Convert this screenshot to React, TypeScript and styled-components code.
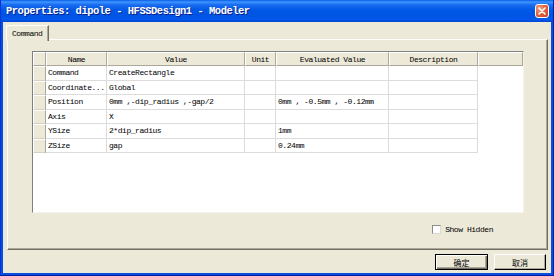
import { Fragment } from "react";
import styled, { createGlobalStyle } from "styled-components";

const GlobalStyle = createGlobalStyle`
  html, body {
    margin: 0;
    padding: 0;
    background: #ffffff;
  }
  #root {
    width: 554px;
    height: 276px;
  }
`

const mono = `"Liberation Mono", "DejaVu Sans Mono", monospace`
const beige = '#ECE9D8'

const Window = styled.div`
  width: 554px;
  height: 276px;
  box-sizing: border-box;
  display: flex;
  flex-direction: column;
  background: #0a4ee0;
  border-left: 1px solid #0831d9;
  border-right: 1px solid #001ea0;
  border-bottom: 1px solid #001ea0;
`
const TitleBar = styled.div`
  height: 22px;
  flex: none;
  display: flex;
  align-items: center;
  justify-content: space-between;
  padding: 0 4px 0 5px;
  background: linear-gradient(to bottom, #0a5ee8 0%, #3d95ff 9%, #1a6cf0 22%, #0058e6 45%, #0054e3 70%, #0058ea 88%, #0046d4 100%);
`
const Title = styled.div`
  font-family: ${mono};
  font-weight: bold;
  font-size: 10.5px;
  letter-spacing: -0.5px;
  color: #ffffff;
  text-shadow: 1px 1px 0 #0a1e8c;
  white-space: nowrap;
`
const CloseButton = styled.div`
  width: 14px;
  height: 14px;
  box-sizing: border-box;
  border: 1px solid #ffffff;
  border-radius: 3px;
  background: radial-gradient(circle at 30% 30%, #f2a080 0%, #e2613c 50%, #c8411d 100%);
  display: flex;
  align-items: center;
  justify-content: center;
`
const Body = styled.div`
  flex: 1;
  margin: 0 2px 2px 2px;
  background: ${beige};
  display: flex;
  flex-direction: column;
  padding: 3px 3px 2px 4px;
`
const TabStrip = styled.div`
  display: flex;
  height: 15px;
  margin-left: -1px;
  position: relative;
  z-index: 1;
  margin-bottom: -1px;
`
const Tab = styled.div`
  box-sizing: border-box;
  height: 16px;
  padding: 2px 6px 0 5px;
  background: ${beige};
  border-top: 1px solid #ffffff;
  border-left: 1px solid #ffffff;
  border-right: 1px solid #716f64;
  border-top-left-radius: 2px;
  box-shadow: inset -1px 0 0 #aca899;
  font-family: ${mono};
  font-size: 8px;
  letter-spacing: -0.45px;
  color: #000;
  line-height: 12px;
`
const Panel = styled.div`
  height: 211px;
  box-sizing: border-box;
  border-top: 1px solid #ffffff;
  border-left: 1px solid #ffffff;
  border-right: 1px solid #716f64;
  border-bottom: 1px solid #716f64;
  box-shadow: inset -1px -1px 0 #aca899;
  padding: 11px 0 0 24px;
  display: flex;
  flex-direction: column;
`
const Well = styled.div`
  width: 492px;
  height: 162px;
  box-sizing: border-box;
  background: #ffffff;
  border-top: 1px solid #808080;
  border-left: 1px solid #808080;
  border-right: 1px solid #f4f3ee;
  border-bottom: 1px solid #f4f3ee;
`
const Table = styled.div`
  display: grid;
  grid-template-columns: 13px 61px 138px 31px 113px 89px 45px;
  grid-template-rows: 14px repeat(6, 14.5px);
`
const cellText = `
  box-sizing: border-box;
  font-family: ${mono};
  font-size: 8px;
  letter-spacing: -0.45px;
  color: #000;
  white-space: nowrap;
  overflow: hidden;
  display: flex;
  align-items: center;
`
const HeadCell = styled.div`
  ${cellText}
  justify-content: center;
  background: ${beige};
  border-top: 1px solid #ffffff;
  border-left: 1px solid #ffffff;
  border-right: 1px solid #aca899;
  border-bottom: 1px solid #aca899;
`
const RowHead = styled.div`
  box-sizing: border-box;
  background: ${beige};
  border-top: 1px solid #ffffff;
  border-left: 1px solid #ffffff;
  border-right: 1px solid #aca899;
  border-bottom: 1px solid #d4d0c8;
`
const Cell = styled.div`
  ${cellText}
  padding-left: 2px;
  background: #ffffff;
  border-right: 1px solid #dcdcdc;
  border-bottom: 1px solid #dcdcdc;
`
const Filler = styled.div`
  background: #ffffff;
`
const CheckRow = styled.div`
  display: flex;
  align-items: center;
  justify-content: flex-end;
  gap: 4px;
  margin-top: 11px;
  padding-right: 54px;
  height: 10px;
`
const CheckBox = styled.div`
  width: 9px;
  height: 9px;
  box-sizing: border-box;
  background: #ffffff;
  border-top: 1px solid #8c8c8c;
  border-left: 1px solid #8c8c8c;
  border-right: 1px solid #d8d8d8;
  border-bottom: 1px solid #d8d8d8;
`
const CheckLabel = styled.span`
  font-family: ${mono};
  font-size: 8px;
  letter-spacing: -0.45px;
  color: #000;
`
const ButtonRow = styled.div`
  display: flex;
  justify-content: flex-end;
  gap: 6px;
  margin-top: 4px;
  padding-right: 2px;
`
const Button = styled.div<{ $default?: boolean }>`
  width: ${p => (p.$default ? '53px' : '52px')};
  height: 16px;
  box-sizing: border-box;
  display: flex;
  align-items: center;
  justify-content: center;
  background: ${beige};
  border-top: 1px solid ${p => (p.$default ? '#000' : '#ffffff')};
  border-left: 1px solid ${p => (p.$default ? '#000' : '#ffffff')};
  border-right: 1px solid #000;
  border-bottom: 1px solid #000;
  box-shadow: ${p => (p.$default
    ? 'inset 1px 1px 0 #ffffff, inset -1px -1px 0 #716f64, inset -2px -2px 0 #aca899'
    : 'inset -1px -1px 0 #aca899')};
  font-family: "Noto Sans CJK SC", sans-serif;
  font-size: 8px;
  color: #000;
`

const rows = [
  ['Command', 'CreateRectangle', '', ''],
  ['Coordinate...', 'Global', '', ''],
  ['Position', '0mm ,-dip_radius ,-gap/2', '', '0mm , -0.5mm , -0.12mm'],
  ['Axis', 'X', '', ''],
  ['YSize', '2*dip_radius', '', '1mm'],
  ['ZSize', 'gap', '', '0.24mm'],
]

const App = () => {
  return (
    <>
      <GlobalStyle />
      <Window>
        <TitleBar>
          <Title>Properties: dipole - HFSSDesign1 - Modeler</Title>
          <CloseButton>
            <svg width="8" height="8" viewBox="0 0 8 8">
              <path d="M1 1 L7 7 M7 1 L1 7" stroke="#ffffff" strokeWidth="1.6" strokeLinecap="round" />
            </svg>
          </CloseButton>
        </TitleBar>
        <Body>
          <TabStrip>
            <Tab>Command</Tab>
          </TabStrip>
          <Panel>
            <Well>
              <Table>
                <HeadCell />
                <HeadCell>Name</HeadCell>
                <HeadCell>Value</HeadCell>
                <HeadCell>Unit</HeadCell>
                <HeadCell>Evaluated Value</HeadCell>
                <HeadCell>Description</HeadCell>
                <HeadCell />
                {rows.map(r => (
                  <Fragment key={r[0]}>
                    <RowHead />
                    <Cell>{r[0]}</Cell>
                    <Cell>{r[1]}</Cell>
                    <Cell>{r[2]}</Cell>
                    <Cell>{r[3]}</Cell>
                    <Cell />
                    <Filler />
                  </Fragment>
                ))}
              </Table>
            </Well>
            <CheckRow>
              <CheckBox />
              <CheckLabel>Show Hidden</CheckLabel>
            </CheckRow>
          </Panel>
          <ButtonRow>
            <Button $default>确定</Button>
            <Button>取消</Button>
          </ButtonRow>
        </Body>
      </Window>
    </>
  );
};
export default App;
